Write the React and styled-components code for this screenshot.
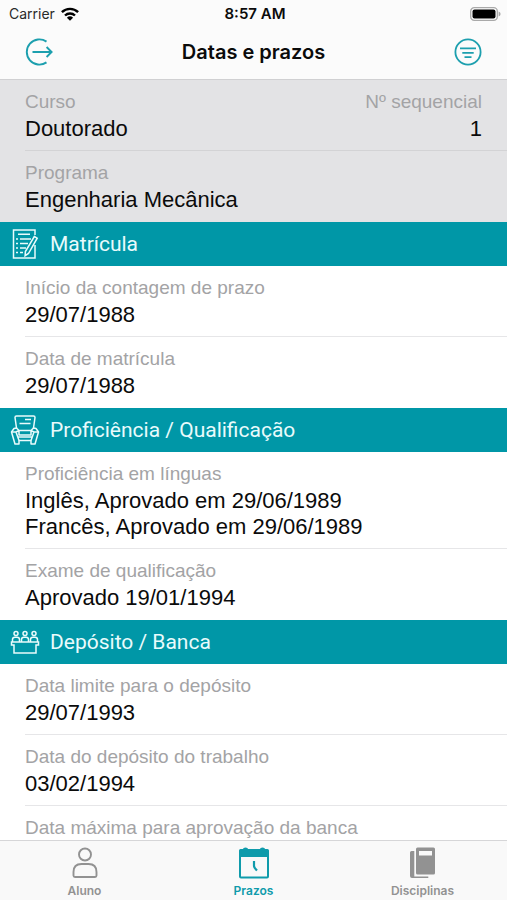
import styled, { createGlobalStyle } from "styled-components";

const GlobalStyle = createGlobalStyle`
  * {
    box-sizing: border-box;
  }
  body {
    margin: 0;
    background: #fff;
  }
`;

const Container = styled.div`
  height: 100vh;
  display: flex;
  flex-direction: column;
  background: #fff;
  color: #0b0b0b;
  font-family: "Inter", "Roboto", sans-serif;
`;
const Header = styled.header`
  flex: none;
  background: #fbfbfb;
  border-bottom: 1px solid #d0d0d2;
`;
const StatusBar = styled.div`
  height: 26px;
  padding: 2px 6px 0 9px;
  display: grid;
  grid-template-columns: 1fr auto 1fr;
  align-items: center;
  font-size: 14px;
  line-height: 20px;
`;
const Carrier = styled.div`
  display: flex;
  align-items: center;
  gap: 6px;
  color: #2a2a2a;
`;
const Time = styled.div`
  font-size: 15px;
  font-weight: 600;
`;
const Battery = styled.svg`
  justify-self: end;
`;
const NavBar = styled.div`
  height: 53px;
  padding: 0 24px 2px;
  display: flex;
  align-items: center;
  justify-content: space-between;
`;
const Title = styled.h1`
  margin: 0;
  font-size: 20px;
  line-height: 26px;
  font-weight: 600;
`;
const IconButton = styled.button`
  width: 30px;
  height: 30px;
  padding: 0;
  border: none;
  background: none;
  color: #1c9fae;
  cursor: pointer;
`;
const Content = styled.main`
  flex: 1;
  min-height: 0;
  overflow-y: auto;
  scrollbar-width: none;
`;
const List = styled.dl`
  margin: 0;
  padding-left: 25px;
  background: ${(props) => (props.$shaded ? "#e3e3e5" : "#fff")};
`;
const Row = styled.div`
  padding: 11px 25px 8px 0;
  display: flex;
  justify-content: space-between;
  border-bottom: 1px solid
    ${(props) => (props.$shaded ? "#d3d3d5" : "#e6e6e8")};

  &:last-child {
    border-bottom-color: transparent;
  }
`;
const Field = styled.div`
  text-align: ${(props) => (props.$right ? "right" : "left")};
  font-family: "Liberation Sans", Arial, sans-serif;
`;
const Label = styled.dt`
  margin-bottom: 3px;
  color: #a3a3a5;
  font-size: 19px;
  line-height: 22px;
`;
const Value = styled.dd`
  margin: 0;
  font-size: 22px;
  line-height: 26px;
`;
const SectionTitle = styled.h2`
  height: 44px;
  margin: 0;
  padding-left: 10px;
  display: flex;
  align-items: center;
  gap: 10px;
  background: #0097a7;
  color: #e9fbfc;
  font-family: "Roboto", sans-serif;
  font-size: 21px;
  line-height: 26px;
  font-weight: 400;
`;
const TabBar = styled.nav`
  flex: none;
  height: 60px;
  display: flex;
  background: #f9f9f9;
  border-top: 1px solid #d6d6d8;
`;
const Tab = styled.a`
  flex: 1;
  padding-top: 6px;
  display: flex;
  flex-direction: column;
  align-items: center;
  gap: 4px;
  color: ${(props) => (props.$active ? "#0f9bab" : "#929292")};
  font-size: 12px;
  line-height: 16px;
  font-weight: 600;
  text-decoration: none;
`;

const WifiIcon = () => (
  <svg width="18" height="14" viewBox="0 0 18 14" fill="none" stroke="#000" strokeWidth="2.4">
    <path d="M.9 5.2a11.6 11.6 0 0 1 16.2 0" />
    <path d="M4 8.5a7.2 7.2 0 0 1 10 0" />
    <path d="M9 13.8 5.9 10.7a4.5 4.5 0 0 1 6.2 0z" fill="#000" stroke="none" />
  </svg>
);

const BatteryIcon = () => (
  <Battery width="31" height="14" viewBox="0 0 31 14">
    <rect x=".7" y=".7" width="26.6" height="12.6" rx="3.6" fill="#fff" stroke="#a9a9a9" strokeWidth="1.3" />
    <rect x="2.5" y="2.5" width="23" height="9" rx="2" fill="#000" />
    <path d="M28.6 4.6q2 .8 2 2.4t-2 2.4z" fill="#a9a9a9" />
  </Battery>
);

const ExitIcon = () => (
  <svg width="30" height="30" viewBox="0 0 30 30" fill="none" stroke="currentColor" strokeWidth="1.9">
    <path d="M22.5 4.6a12.6 12.6 0 1 0 0 20.8" />
    <path d="M8.5 15h19M22.6 10l5 5-5 5" />
  </svg>
);

const FilterIcon = () => (
  <svg width="30" height="30" viewBox="0 0 30 30" fill="none" stroke="currentColor" strokeWidth="1.8">
    <circle cx="15" cy="15" r="12.6" />
    <path d="M7 11.3h16M9.3 15.8h11.4M11.5 20.2h7" />
  </svg>
);

const FormIcon = () => (
  <svg width="30" height="32" viewBox="0 0 30 32" fill="none" stroke="currentColor" strokeWidth="1.5">
    <path d="M25 7V2H3.5v28H25V17" />
    <path d="M8 6.2h12M6 11h2M10 11h11M6 15.5h2M10 15.5h8M6 20h2M10 20h6M6 24.5h2M10 24.5h3" />
    <path d="M24.3 8.5 27.2 10.2l-8.7 15.3-3.4 2.2.3-4.1z" fill="#0097a7" />
  </svg>
);

const ChairIcon = () => (
  <svg width="30" height="32" viewBox="0 0 30 32" fill="none" stroke="currentColor" strokeWidth="1.5" strokeLinejoin="round">
    <path d="M6.5 14 5 3.5Q5 2 6.500 2h17Q25 2 25 3.500L23.500 14" />
    <path d="M15 5.500h6M9.500 9.500h11" />
    <path d="M6.500 14 4 14.500 1.500 18 5 30h4v-3.500h12V30h4l3.500-12-2.500-3.500-2.500-.5-2.500 2.500h-12z" />
    <path d="M1.500 18h4.500L9 16.500M28.500 18H24l-3-1.500M6 18l3 8.500M24 18l-3 8.500M9 16.500v4.500h12v-4.500M8 23h14" />
  </svg>
);

const BoardIcon = () => (
  <svg width="30" height="26" viewBox="0 0 30 26" fill="none" stroke="currentColor" strokeWidth="1.5">
    <path d="M1.500 13h27v3h-2.500v8H4v-8H1.500z" />
    {[6, 15, 24].map((x) => (
      <g key={x}>
        <circle cx={x} cy="4.500" r="2" />
        <path d={`M${x - 3.5} 13v-2.400q0-2.400 2.400-2.400h2.200q2.400 0 2.400 2.400V13`} />
      </g>
    ))}
  </svg>
);

const PersonIcon = () => (
  <svg width="32" height="32" viewBox="0 0 32 32" fill="none" stroke="currentColor" strokeWidth="1.9">
    <circle cx="16" cy="7.500" r="6" />
    <path d="M4.500 28.500V25q0-8 8-8h7q8 0 8 8v3.500q0 1.500-1.500 1.500H6q-1.500 0-1.500-1.500z" />
  </svg>
);

const CalendarIcon = () => (
  <svg width="32" height="32" viewBox="0 0 32 32" fill="none" stroke="currentColor" strokeWidth="2">
    <path d="M1 3.500Q1 2 2.500 2H5q0-1.500 2.500-1.500T10 2h12q0-1.500 2.500-1.500T27 2h2.500Q31 2 31 3.500V10H1z" fill="currentColor" stroke="none" />
    <path d="M2 9v20.500q0 1 1 1h26q1 0 1-1V9" />
    <path d="M16 14v5q0 1.500 3 4.500" strokeWidth="2.200" />
  </svg>
);

const BooksIcon = () => (
  <svg width="32" height="32" viewBox="0 0 32 32" fill="currentColor">
    <path d="M10.500.5h16q1.500 0 1.500 1.500v24q0 1.500-1.500 1.500h-16Q9 27.500 9 26V2q0-1.500 1.500-1.500zM12 4v4.500h13V4z" fillRule="evenodd" />
    <path d="M4.500 4H7.300v25.500h14v1.500H5q-2 0-2-2V5.500Q3 4 4.500 4z" />
  </svg>
);

const sections = [
  {
    title: "Matrícula",
    Icon: FormIcon,
    rows: [
      { label: "Início da contagem de prazo", values: ["29/07/1988"] },
      { label: "Data de matrícula", values: ["29/07/1988"] },
    ],
  },
  {
    title: "Proficiência / Qualificação",
    Icon: ChairIcon,
    rows: [
      {
        label: "Proficiência em línguas",
        values: ["Inglês, Aprovado em 29/06/1989", "Francês, Aprovado em 29/06/1989"],
      },
      { label: "Exame de qualificação", values: ["Aprovado 19/01/1994"] },
    ],
  },
  {
    title: "Depósito / Banca",
    Icon: BoardIcon,
    rows: [
      { label: "Data limite para o depósito", values: ["29/07/1993"] },
      { label: "Data do depósito do trabalho", values: ["03/02/1994"] },
      { label: "Data máxima para aprovação da banca", values: [] },
    ],
  },
];

const tabs = [
  { name: "Aluno", Icon: PersonIcon },
  { name: "Prazos", Icon: CalendarIcon, active: true },
  { name: "Disciplinas", Icon: BooksIcon },
];

const Item = ({ label, values, right }) => (
  <Field $right={right}>
    <Label>{label}</Label>
    {values.map((value) => (
      <Value key={value}>{value}</Value>
    ))}
  </Field>
);

const App = () => {
  return (
    <Container>
      <GlobalStyle />
      <Header>
        <StatusBar>
          <Carrier>
            Carrier
            <WifiIcon />
          </Carrier>
          <Time>8:57 AM</Time>
          <BatteryIcon />
        </StatusBar>
        <NavBar>
          <IconButton type="button" aria-label="Sair">
            <ExitIcon />
          </IconButton>
          <Title>Datas e prazos</Title>
          <IconButton type="button" aria-label="Filtrar">
            <FilterIcon />
          </IconButton>
        </NavBar>
      </Header>
      <Content>
        <List $shaded>
          <Row $shaded>
            <Item label="Curso" values={["Doutorado"]} />
            <Item label="Nº sequencial" values={["1"]} right />
          </Row>
          <Row $shaded>
            <Item label="Programa" values={["Engenharia Mecânica"]} />
          </Row>
        </List>
        {sections.map(({ title, Icon, rows }) => (
          <section key={title}>
            <SectionTitle>
              <Icon />
              {title}
            </SectionTitle>
            <List>
              {rows.map((row) => (
                <Row key={row.label}>
                  <Item {...row} />
                </Row>
              ))}
            </List>
          </section>
        ))}
      </Content>
      <TabBar>
        {tabs.map(({ name, Icon, active }) => (
          <Tab key={name} href="#" $active={active}>
            <Icon />
            {name}
          </Tab>
        ))}
      </TabBar>
    </Container>
  );
};

export default App;
